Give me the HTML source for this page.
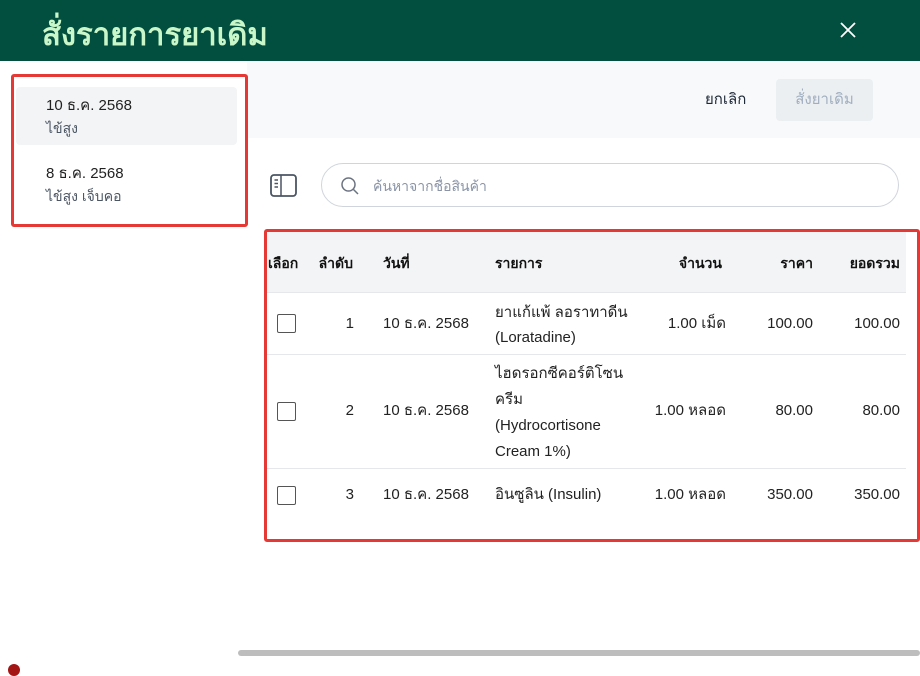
<!DOCTYPE html>
<html><head><meta charset="utf-8"><style>
*{margin:0;padding:0;box-sizing:border-box}
body{width:920px;height:668px;overflow:hidden;background:#fff;font-family:"Liberation Sans","Noto Sans CJK SC",sans-serif;color:#1f2937;position:relative}
.a{position:absolute;white-space:nowrap}
.t{font-size:15px;color:#222}
.r{text-align:right}
.cb{position:absolute;width:19px;height:19px;border:1.5px solid #555;border-radius:2px;background:#fff}
.hl{position:absolute;left:266px;width:640px;height:1px;background:#e5e7eb}
.th{font-size:14px;font-weight:bold;color:#111}
</style></head><body>
<div class="a" style="left:0;top:0;width:920px;height:61px;background:#024f3f"></div>
<div class="a" style="left:42px;top:15px;font-size:31px;color:#c9f7c9;font-weight:bold;line-height:40px">สั่งรายการยาเดิม</div>
<svg class="a" style="left:839px;top:21px" width="18" height="18" viewBox="0 0 18 18"><path d="M2 2L16 16M16 2L2 16" stroke="#fff" stroke-width="1.8"/></svg>

<div class="a" style="left:247px;top:61px;width:673px;height:77px;background:#f8f9fb"></div>
<div class="a" style="left:705px;top:90px;font-size:15px;color:#1f2937;line-height:20px">ยกเลิก</div>
<div class="a" style="left:776px;top:79px;width:97px;height:42px;background:#eceff2;border-radius:4px;color:#a0aec0;font-size:15px;text-align:center;line-height:42px">สั่งยาเดิม</div>

<div class="a" style="left:11px;top:74px;width:237px;height:153px;border:3px solid #e53935;border-radius:3px"></div>
<div class="a" style="left:16px;top:87px;width:221px;height:58px;background:#f3f4f6;border-radius:4px"></div>
<div class="a t" style="left:46px;top:96px;line-height:20px">10 ธ.ค. 2568</div>
<div class="a" style="left:46px;top:118px;font-size:14px;color:#4b5563;line-height:20px">ไข้สูง</div>
<div class="a t" style="left:46px;top:164px;line-height:20px">8 ธ.ค. 2568</div>
<div class="a" style="left:46px;top:186px;font-size:14px;color:#4b5563;line-height:20px">ไข้สูง เจ็บคอ</div>

<svg class="a" style="left:270px;top:174px" width="27" height="23" viewBox="0 0 27 23"><rect x="1" y="1" width="25" height="21" rx="3" fill="none" stroke="#4b5563" stroke-width="1.8"/><path d="M11 1V22M4.5 6H8M4.5 9.5H8M4.5 13H8" stroke="#4b5563" stroke-width="1.5"/></svg>
<div class="a" style="left:321px;top:163px;width:578px;height:44px;border:1px solid #d0d5dd;border-radius:22px"></div>
<svg class="a" style="left:340px;top:176px" width="20" height="20" viewBox="0 0 20 20"><circle cx="8.5" cy="8.5" r="6.5" fill="none" stroke="#6b7280" stroke-width="1.5"/><path d="M13.5 13.5L18 18" stroke="#6b7280" stroke-width="1.5"/></svg>
<div class="a" style="left:373px;top:176px;font-size:14px;color:#8a94a6;line-height:20px">ค้นหาจากชื่อสินค้า</div>

<div class="a" style="left:266px;top:232px;width:640px;height:60px;background:#f3f4f6"></div>
<div class="hl" style="top:292px"></div><div class="hl" style="top:354px"></div><div class="hl" style="top:468px"></div>
<div class="a th" style="left:268px;top:253px;line-height:20px">เลือก</div>
<div class="a th r" style="right:567px;top:253px;line-height:20px">ลำดับ</div>
<div class="a th" style="left:383px;top:253px;line-height:20px">วันที่</div>
<div class="a th" style="left:495px;top:253px;line-height:20px">รายการ</div>
<div class="a th" style="right:198px;top:253px;line-height:20px">จำนวน</div>
<div class="a th" style="right:107px;top:253px;line-height:20px">ราคา</div>
<div class="a th" style="right:20px;top:253px;line-height:20px">ยอดรวม</div>

<div class="cb" style="left:277px;top:314px"></div>
<div class="a t" style="right:566px;top:314px;line-height:20px">1</div>
<div class="a t" style="left:383px;top:314px;line-height:20px">10 ธ.ค. 2568</div>
<div class="a t" style="left:495px;top:300px;line-height:25px">ยาแก้แพ้ ลอราทาดีน<br>(Loratadine)</div>
<div class="a t" style="right:194px;top:314px;line-height:20px">1.00 เม็ด</div>
<div class="a t" style="right:107px;top:314px;line-height:20px">100.00</div>
<div class="a t" style="right:20px;top:314px;line-height:20px">100.00</div>

<div class="cb" style="left:277px;top:402px"></div>
<div class="a t" style="right:566px;top:401px;line-height:20px">2</div>
<div class="a t" style="left:383px;top:401px;line-height:20px">10 ธ.ค. 2568</div>
<div class="a t" style="left:495px;top:361px;line-height:26px">ไฮดรอกซีคอร์ติโซน<br>ครีม<br>(Hydrocortisone<br>Cream 1%)</div>
<div class="a t" style="right:194px;top:401px;line-height:20px">1.00 หลอด</div>
<div class="a t" style="right:107px;top:401px;line-height:20px">80.00</div>
<div class="a t" style="right:20px;top:401px;line-height:20px">80.00</div>

<div class="cb" style="left:277px;top:486px"></div>
<div class="a t" style="right:566px;top:485px;line-height:20px">3</div>
<div class="a t" style="left:383px;top:485px;line-height:20px">10 ธ.ค. 2568</div>
<div class="a t" style="left:495px;top:485px;line-height:20px">อินซูลิน (Insulin)</div>
<div class="a t" style="right:194px;top:485px;line-height:20px">1.00 หลอด</div>
<div class="a t" style="right:107px;top:485px;line-height:20px">350.00</div>
<div class="a t" style="right:20px;top:485px;line-height:20px">350.00</div>

<div class="a" style="left:264px;top:229px;width:656px;height:313px;border:3px solid #e53935;border-radius:3px"></div>
<div class="a" style="left:238px;top:650px;width:682px;height:6px;background:#bdbdbd;border-radius:3px"></div>
<div class="a" style="left:8px;top:664px;width:12px;height:12px;background:#a31515;border-radius:50%"></div>
</body></html>
